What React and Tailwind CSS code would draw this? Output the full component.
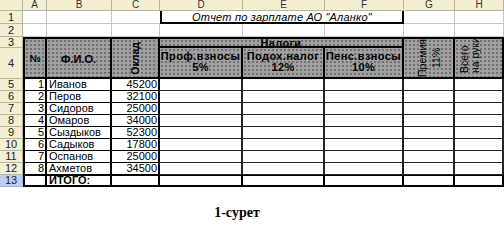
import React from "react";

const GL = "border-r border-b border-[#c8c8c8]";
const HDR = "bg-[#f2efd3] border-r border-b border-[#b9b6a0] flex items-center justify-center text-[10px] text-[#333]";
const LBL = "bg-[#f2efd3] border-r border-b border-[#b9b6a0] flex items-center justify-center text-[11px] text-[#222]";
const GRAY = "bg-[#a0a0a0] bg-[radial-gradient(circle,#585858_0.6px,transparent_0.9px)] bg-size-[4px_4px]";

const data = [
  [1, "Иванов", 45200],
  [2, "Перов", 32100],
  [3, "Сидоров", 25000],
  [4, "Омаров", 34000],
  [5, "Сыздыков", 52300],
  [6, "Садыков", 17800],
  [7, "Оспанов", 25000],
  [8, "Ахметов", 34500],
];

export default function App() {
  return (
    <div className="w-[504px] h-[242px] bg-white overflow-hidden" style={{ fontFamily: '"Liberation Sans", Arial, sans-serif' }}>
      <div className="grid grid-cols-[23px_24px_65px_48px_83px_82px_79px_51px_49px] grid-rows-[11px_13px_13px_11px_31px_repeat(9,12px)] leading-none text-black">
        {/* column headers */}
        <div className={HDR}></div>
        {["A", "B", "C", "D", "E", "F", "G", "H"].map((c) => (
          <div key={c} className={HDR}>{c}</div>
        ))}

        {/* row 1 */}
        <div className={LBL}>1</div>
        <div className={GL}></div>
        <div className={GL}></div>
        <div className="border-b border-[#c8c8c8]"></div>
        <div className="col-span-3 border-l-2 border-r-2 border-b-2 border-black flex items-center justify-center italic text-[11px] pt-[1px] tracking-[0.2px]">
          Отчет по зарплате АО "Аланко"
        </div>
        <div className={GL}></div>
        <div className={GL}></div>

        {/* row 2 */}
        <div className={LBL}>2</div>
        <div className={GL}></div>
        <div className={GL}></div>
        <div className={GL}></div>
        <div className={GL}></div>
        <div className={GL}></div>
        <div className={GL}></div>
        <div className={GL}></div>
        <div className={GL}></div>

        {/* row 3 */}
        <div className={LBL}>3</div>
        <div className={`row-span-2 ${GRAY} border-l-2 border-t-2 border-r-2 border-b-2 border-black flex items-center justify-center font-bold text-[10px] pt-[2px]`}>№</div>
        <div className={`row-span-2 ${GRAY} border-t-2 border-r-2 border-b-2 border-black flex items-center justify-center font-bold text-[11px] pt-[2px]`}>Ф.И.О.</div>
        <div className={`row-span-2 ${GRAY} border-t-2 border-r-2 border-b-2 border-black flex items-center justify-center pl-[1px]`}>
          <span className="[writing-mode:vertical-rl] rotate-180 whitespace-nowrap font-bold text-[10.5px] leading-none">Оклад</span>
        </div>
        <div className={`col-span-3 ${GRAY} border-t-2 border-r-2 border-b-2 border-black flex items-center justify-center font-bold text-[11px] overflow-visible`}>
          <span className="leading-[9px] tracking-[0.3px] translate-y-[1px]">Налоги</span>
        </div>
        <div className={`row-span-2 ${GRAY} border-t-2 border-r-2 border-b-2 border-black flex items-center justify-center pl-[1px]`}>
          <span className="[writing-mode:vertical-rl] rotate-180 whitespace-nowrap text-center text-[10.5px] leading-[14px] text-black">Премия<br />11%</span>
        </div>
        <div className={`row-span-2 ${GRAY} border-t-2 border-r-2 border-b-2 border-black flex items-center justify-start pl-[4px]`}>
          <span className="[writing-mode:vertical-rl] rotate-180 whitespace-nowrap text-left text-[10.5px] leading-[11px] mb-[6px] text-black">Всего<br />на руки</span>
        </div>

        {/* row 4 */}
        <div className={LBL}>4</div>
        {[["Проф.взносы", "5%"], ["Подох.налог", "12%"], ["Пенс.взносы", "10%"]].map(([a, b]) => (
          <div key={a} className={`${GRAY} border-r-2 border-b-2 border-black flex flex-col items-center pt-[3px] font-bold text-[11px] leading-[11px] tracking-[0.4px]`}>
            <span>{a}</span>
            <span>{b}</span>
          </div>
        ))}

        {/* data rows */}
        {data.map(([n, name, sum], i) => (
          <React.Fragment key={n}>
            <div className={LBL}>{i + 5}</div>
            <div className="border-l-2 border-r-2 border-b border-black flex items-center justify-end pr-[1px] text-[11px]">{n}</div>
            <div className="border-r-2 border-b border-black flex items-center pl-[2px] text-[11px]">{name}</div>
            <div className="border-r-2 border-b border-black flex items-center justify-end pr-[1px] text-[11px]">{sum}</div>
            <div className="border-r-2 border-b border-[#222]"></div>
            <div className="border-r-2 border-b border-[#222]"></div>
            <div className="border-r-2 border-b border-[#222]"></div>
            <div className="border-r-2 border-b border-[#222]"></div>
            <div className="border-r-2 border-b border-[#222]"></div>
          </React.Fragment>
        ))}

        {/* row 13 */}
        <div className="bg-[#c3cff0] border-r border-b border-[#9fb0dd] flex items-center justify-center text-[11px] text-[#222]">13</div>
        <div className="border-l-2 border-r-2 border-b-2 border-t border-black"></div>
        <div className="border-r-2 border-b-2 border-t border-black flex items-center pl-[2px] font-bold text-[11px]">ИТОГО:</div>
        <div className="border-r-2 border-b-2 border-t border-black"></div>
        <div className="border-r-2 border-b-2 border-t border-black"></div>
        <div className="border-r-2 border-b-2 border-t border-black"></div>
        <div className="border-r-2 border-b-2 border-t border-black"></div>
        <div className="border-r-2 border-b-2 border-t border-black"></div>
        <div className="border-r-2 border-b-2 border-t border-black"></div>
      </div>

      <div className="h-[55px] flex justify-center pt-[19px] pr-[30px]">
        <span className="font-bold text-[14px] leading-none" style={{ fontFamily: '"Liberation Serif", "Times New Roman", serif' }}>1-сурет</span>
      </div>
    </div>
  );
}
